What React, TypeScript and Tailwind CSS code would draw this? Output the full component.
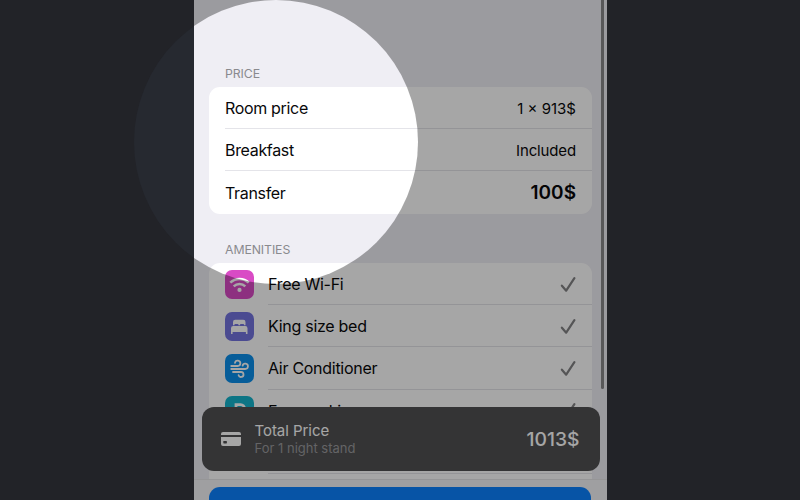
import React from "react";

type Amenity = { label: string; tile: string; icon: React.ReactNode };

const WifiGlyph = () => (
  <svg viewBox="0 0 29 29" className="size-full" fill="none" stroke="#fff" strokeWidth="2.5" strokeLinecap="butt">
    <path d="M5.3 12.7a13 13 0 0 1 18.4 0" />
    <path d="M8.7 16.3a8.2 8.2 0 0 1 11.6 0" />
    <circle cx="14.5" cy="19.9" r="2.1" fill="#fff" stroke="none" />
  </svg>
);

const BedGlyph = () => (
  <svg viewBox="0 0 29 29" className="size-full" fill="#fff">
    <path d="M8 13.2V10a2.2 2.2 0 0 1 2.2-2.2h8.1a2.2 2.2 0 0 1 2.2 2.2v3.2h-1.4v-.4a.9.9 0 0 0-.9-.9h-2.3a.9.9 0 0 0-.9.9v.4h-1.5v-.4a.9.9 0 0 0-.9-.9h-2.3a.9.9 0 0 0-.9.9v.4z" />
    <path d="M6 22v-5.8a2.2 2.2 0 0 1 2.2-2.2h12.1a2.2 2.2 0 0 1 2.2 2.2V22h-1.6v-2H7.6v2z" />
  </svg>
);

const WindGlyph = () => (
  <svg viewBox="0 0 29 29" className="size-full" fill="none" stroke="#fff" strokeWidth="1.8" strokeLinecap="round" strokeLinejoin="round">
    <path d="M6.2 12h6.4a2.7 2.7 0 1 0-2.6-3.2" />
    <path d="M6.2 15h14a2.7 2.7 0 1 0-2.6-3.3" />
    <path d="M8 18h8a2.5 2.5 0 1 1-2.4 3.2" />
  </svg>
);

const ParkingGlyph = () => (
  <svg viewBox="0 0 29 29" className="size-full" fill="none" stroke="#fff" strokeWidth="2.8">
    <path d="M11 22V8.6h4.6a3.9 3.9 0 0 1 0 7.8H11" />
  </svg>
);

const Check = () => (
  <svg viewBox="0 0 16 16" className="size-4" fill="none" stroke="#838385" strokeWidth="2.2" strokeLinecap="round" strokeLinejoin="round">
    <path d="M1.9 9.7 6.2 14.7 14.4 2.2" />
  </svg>
);

const amenities: Amenity[] = [
  { label: "Free Wi-Fi", tile: "bg-[#d94bc5]", icon: <WifiGlyph /> },
  { label: "King size bed", tile: "bg-[#7473df]", icon: <BedGlyph /> },
  { label: "Air Conditioner", tile: "bg-[#0c8fec]", icon: <WindGlyph /> },
  { label: "Free parking", tile: "bg-[#14b4cc]", icon: <ParkingGlyph /> },
];

const prices = [
  { label: "Room price", value: "1 × 913$", style: "pt-[3px] text-[15px]" },
  { label: "Breakfast", value: "Included", style: "pt-[3px] text-[15px] tracking-[-0.15px]" },
  { label: "Transfer", value: "100$", style: "pt-[1px] text-[19px] font-semibold" },
];

export default function App() {
  return (
    <div className="relative flex h-[500px] w-[800px] justify-center overflow-hidden bg-[#222328] font-['Inter',sans-serif] text-[#08080a]">
      <div className="absolute left-[134px] top-0 size-[284px] rounded-full bg-[#262930]" />

      <main className="relative mr-px ml-[2px] h-full w-[413px] overflow-hidden bg-[#efeef4]">
        <div className="px-[15px] pt-[66px]">
          <h2 className="h-[21px] pl-4 text-[12.3px] leading-4 tracking-[-0.1px] text-[#8a8a8e]">PRICE</h2>
          <section className="w-[383px] overflow-hidden rounded-[11px] bg-white">
            {prices.map((p, i) => (
              <div key={p.label} className="h-[42.2px] pl-4">
                <div
                  className={
                    "flex h-full items-center justify-between pr-4 " +
                    (i < prices.length - 1 ? "border-b border-[#e4e4e9]" : "")
                  }
                >
                  <span className="pt-px text-[16px] tracking-[-0.33px]">{p.label}</span>
                  <span className={p.style}>{p.value}</span>
                </div>
              </div>
            ))}
          </section>

          <h2 className="mt-[28.4px] h-[21px] pl-4 text-[12.3px] leading-4 tracking-[-0.1px] text-[#8a8a8e]">AMENITIES</h2>
          <section className="h-[260px] w-[383px] rounded-t-[11px] bg-white">
            {amenities.map((a) => (
              <div key={a.label} className="flex h-[42.2px] items-center pl-4">
                <div className={"size-[29px] shrink-0 rounded-[7px] " + a.tile}>{a.icon}</div>
                <div className="ml-[14px] flex h-full flex-1 items-center justify-between border-b border-[#e4e4e9] pr-4">
                  <span className="pt-px text-[16px] tracking-[-0.28px]">{a.label}</span>
                  <Check />
                </div>
              </div>
            ))}
            <div className="ml-[59px] h-[42.2px] border-b border-[#e4e4e9]" />
          </section>
        </div>

        <div className="absolute right-[3px] top-0 h-[389px] w-[3px] rounded-b-full bg-[#878789]" />

        <footer className="absolute inset-x-0 bottom-0 h-[21px] border-t border-[#e6e6e9] bg-[#f5f4f7] px-[15px] pt-[7px]">
          <div className="h-12 w-[382px] rounded-[11px] bg-[#0c82ff]" />
        </footer>

        <div className="absolute left-[7.5px] top-[407px] flex h-16 w-[398px] items-center rounded-[12px] bg-[#505052] pr-5 pl-[19px] text-white">
          <svg viewBox="0 0 20 14" className="h-[14px] w-5">
            <path fill="#fff" d="M0 3V2a2 2 0 0 1 2-2h16a2 2 0 0 1 2 2v1zM0 5h20v7a2 2 0 0 1-2 2H2a2 2 0 0 1-2-2z" />
            <rect x="2.3" y="9" width="3.6" height="2.4" rx=".6" fill="#505052" />
          </svg>
          <div className="ml-[14px] flex-1">
            <div className="pt-px text-[15px] leading-[18px] tracking-[-0.05px]">Total Price</div>
            <div className="text-[13px] leading-[17px] text-[#9a9a9d]">For 1 night stand</div>
          </div>
          <div className="text-[19.3px] font-medium">1013$</div>
        </div>

        <div className="pointer-events-none absolute left-[-60px] top-0 size-[284px] rounded-full shadow-[0_0_0_800px_rgba(0,0,0,0.35)]" />
      </main>
    </div>
  );
}
